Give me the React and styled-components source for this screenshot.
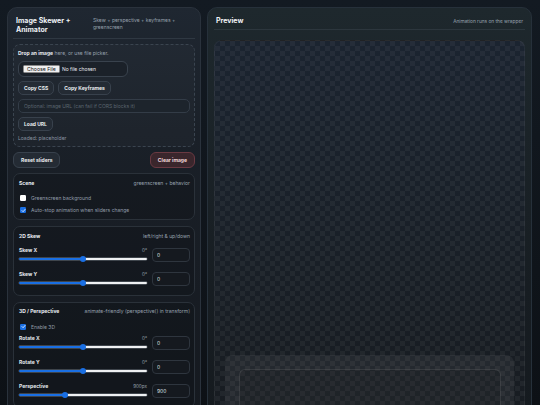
import React from 'react';
import styled, { createGlobalStyle } from 'styled-components';

const GlobalStyle = createGlobalStyle`
  html, body { margin: 0; padding: 0; }
  body {
    background: linear-gradient(180deg, #131a22 0%, #0d1116 100%);
    font-family: Inter, "Noto Sans", sans-serif;
    color: #e9edf2;
    overflow: hidden;
  }
  * { box-sizing: border-box; }
`;

const Page = styled.div`
  display: grid;
  grid-template-columns: 194px 325px;
  column-gap: 6px;
  padding: 7px 8px 0 7px;
  height: 405px;
  overflow: hidden;
  align-items: start;
`;

const LeftPanel = styled.section`
  border: 1px solid #2a323c;
  border-radius: 10px;
  background: linear-gradient(180deg, #1f2731 0%, #1a2028 30%, #15191f 100%);
  padding: 8px 5px 10px;
  display: flex;
  flex-direction: column;
  gap: 5px;
`;

const RightPanel = styled.section`
  border: 1px solid #26303a;
  border-radius: 10px;
  background: linear-gradient(180deg, #1e282d 0%, #171d22 40%, #111418 100%);
  padding: 7px 6px 0;
  height: 700px;
  display: flex;
  flex-direction: column;
`;

const Header = styled.header`
  display: flex;
  justify-content: space-between;
  gap: 8px;
  padding: 0 3px 4px;
  border-bottom: 1px solid #2f3842;
`;

const Title = styled.h1`
  margin: 0;
  flex: 1;
  font-size: 7px;
  line-height: 9px;
  font-weight: 700;
  color: #eef1f5;
`;

const Subtitle = styled.p`
  margin: 1px 0 0;
  flex: 0 0 99px;
  font-size: 5px;
  line-height: 7px;
  color: #97a1ad;
`;

const PreviewHeader = styled.header`
  display: flex;
  justify-content: space-between;
  align-items: center;
  padding: 1px 2px 4px;
  border-bottom: 1px solid #2c363d;
  margin-bottom: 10px;
`;

const DropZone = styled.div`
  border: 1px dashed #3a444f;
  border-radius: 7px;
  background: rgba(255, 255, 255, 0.02);
  padding: 5px 4px;
  display: flex;
  flex-direction: column;
  align-items: flex-start;
  gap: 4px;
`;

const Hint = styled.p`
  margin: 0 0 1px;
  font-size: 5px;
  line-height: 6px;
  color: #98a2ae;
  strong { color: #e6eaef; font-weight: 700; }
`;

const FileBox = styled.label`
  display: flex;
  align-items: center;
  gap: 2px;
  width: 110px;
  height: 16px;
  padding: 0 4px;
  border: 1px solid #39424d;
  border-radius: 6px;
  background: #1b2129;
  font-size: 5px;
  color: #e8ebef;
  input { display: none; }
`;

const FileButton = styled.span`
  display: inline-flex;
  align-items: center;
  height: 8px;
  padding: 0 3px;
  background: #efefef;
  color: #111;
  border: 0.5px solid #8a8a8a;
  border-radius: 1.5px;
  font-size: 5.2px;
`;

const Row = styled.div`
  display: flex;
  gap: 4px;
  justify-content: ${(p) => (p.$spread ? 'space-between' : 'flex-start')};
  width: 100%;
`;

const Button = styled.button`
  height: ${(p) => (p.$big ? 16 : 14)}px;
  padding: 0 ${(p) => (p.$big ? 7 : 5)}px;
  border-radius: ${(p) => (p.$big ? 6 : 5)}px;
  border: 1px solid ${(p) => (p.$danger ? '#6a3942' : '#38414c')};
  background: ${(p) => (p.$danger ? '#3a262c' : '#242b34')};
  color: ${(p) => (p.$danger ? '#f1d9dc' : '#e8ebef')};
  font-family: inherit;
  font-size: 5px;
  font-weight: 700;
  cursor: pointer;
`;

const TextInput = styled.input`
  width: 100%;
  height: 14px;
  padding: 0 5px;
  border: 1px solid #333c47;
  border-radius: 5px;
  background: #1d242c;
  color: #e8ebef;
  font-family: inherit;
  font-size: 5px;
  outline: none;
  &::placeholder { color: #5c6570; }
`;

const Muted = styled.p`
  margin: 0;
  font-size: 5px;
  line-height: 6px;
  color: #8c96a2;
`;

const Card = styled.div`
  border: 1px solid #2a3139;
  border-radius: 7px;
  background: rgba(10, 13, 17, 0.28);
  padding: 5px 4px ${(p) => (p.$tight ? 5 : 7.5)}px 5px;
  margin-bottom: 1px;
  display: flex;
  flex-direction: column;
  gap: 8px;
`;

const CardHead = styled.div`
  display: flex;
  justify-content: space-between;
  align-items: center;
  height: 7px;
  font-size: 5px;
  strong { font-weight: 700; color: #e9edf2; }
  span { color: #98a2ae; }
`;

const CheckList = styled.div`
  display: flex;
  flex-direction: column;
  gap: 4px;
`;

const CheckRow = styled.label`
  display: flex;
  align-items: center;
  gap: 5px;
  height: 8px;
  padding-left: 1px;
  margin-bottom: ${(p) => (p.$pull ? '-3.5px' : '0')};
  font-size: 5px;
  color: #929ca8;
  cursor: pointer;
`;

const Box = styled.span`
  width: 6px;
  height: 6px;
  border-radius: 1.2px;
  background: ${(p) => (p.$on ? '#1a6fe3' : '#ffffff')};
  display: inline-flex;
  align-items: center;
  justify-content: center;
  flex: none;
`;

const SliderRow = styled.div`
  display: grid;
  grid-template-columns: 1fr 38px;
  column-gap: 5px;
  align-items: center;
  height: 16px;
`;

const SliderCol = styled.div`
  display: flex;
  flex-direction: column;
  gap: 1px;
`;

const SliderLabel = styled.div`
  display: flex;
  justify-content: space-between;
  height: 7px;
  font-size: 5px;
  line-height: 7px;
  strong { font-weight: 700; color: #e6eaef; }
  span { color: #98a2ae; font-size: 4.6px; }
`;

const Range = styled.input`
  -webkit-appearance: none;
  appearance: none;
  width: 100%;
  height: 8px;
  margin: 0;
  background: transparent;
  display: block;
  &::-webkit-slider-runnable-track {
    height: 2.6px;
    border-radius: 2px;
    background: linear-gradient(
      to right,
      #1a6fe3 0%,
      #1a6fe3 ${(p) => p.$pct}%,
      #eef0f2 ${(p) => p.$pct}%,
      #eef0f2 100%
    );
    box-shadow: 0 0 0 0.4px #6b727a;
  }
  &::-webkit-slider-thumb {
    -webkit-appearance: none;
    width: 6px;
    height: 6px;
    margin-top: -1.7px;
    border-radius: 50%;
    background: #1a6fe3;
    border: none;
  }
`;

const NumberBox = styled.input`
  width: 38px;
  height: 14px;
  padding: 0 4px;
  border: 1px solid #2e353e;
  border-radius: 4px;
  background: #15191f;
  color: #dfe3e8;
  font-family: inherit;
  font-size: 5px;
  outline: none;
  -moz-appearance: textfield;
  &::-webkit-inner-spin-button { -webkit-appearance: none; }
`;

const PreviewTitle = styled.h2`
  margin: 0;
  font-size: 7px;
  line-height: 9px;
  font-weight: 700;
  color: #eef1f5;
`;

const PreviewNote = styled.span`
  font-size: 4.8px;
  color: #97a1ad;
`;

const Checker = styled.div`
  border: 1px solid rgba(255, 255, 255, 0.05);
  border-radius: 8px;
  min-height: 640px;
  padding: 314px 10px 0;
  display: flex;
  flex-direction: column;
  align-items: stretch;
  background-color: #171b20;
  background-image:
    linear-gradient(45deg, rgba(255,255,255,0.045) 25%, transparent 25%, transparent 75%, rgba(255,255,255,0.045) 75%),
    linear-gradient(45deg, rgba(255,255,255,0.045) 25%, transparent 25%, transparent 75%, rgba(255,255,255,0.045) 75%),
    linear-gradient(180deg, #1b2430 0%, #181d23 50%, #151719 100%);
  background-size: 10px 10px, 10px 10px, 100% 100%;
  background-position: 0 0, 5px 5px, 0 0;
`;

const Stage = styled.div`
  border-radius: 8px;
  background: rgba(255, 255, 255, 0.055);
  padding: 14px 13px 0 14px;
  height: 200px;
`;

const Frame = styled.div`
  height: 100%;
  border: 1px solid rgba(255, 255, 255, 0.1);
  border-radius: 6px;
  background: rgba(0, 0, 0, 0.12);
`;

function Check({ on, label, pull }) {
  return (
    <CheckRow $pull={pull}>
      <Box $on={on}>
        {on && (
          <svg width="5" height="5" viewBox="0 0 10 10">
            <path d="M2 5.2 L4.2 7.4 L8.2 2.8" fill="none" stroke="#fff" strokeWidth="1.6" strokeLinecap="round" strokeLinejoin="round" />
          </svg>
        )}
      </Box>
      {label}
    </CheckRow>
  );
}

function Slider({ label, unit, min, max, value }) {
  const pct = ((value - min) / (max - min)) * 100;
  return (
    <SliderRow>
      <SliderCol>
        <SliderLabel>
          <strong>{label}</strong>
          <span>{value}{unit}</span>
        </SliderLabel>
        <Range type="range" min={min} max={max} defaultValue={value} $pct={pct} />
      </SliderCol>
      <NumberBox type="number" defaultValue={value} />
    </SliderRow>
  );
}

export default function App() {
  return (
    <>
      <GlobalStyle />
      <Page>
        <LeftPanel>
          <Header>
            <Title>Image Skewer + Animator</Title>
            <Subtitle>Skew + perspective + keyframes + greenscreen</Subtitle>
          </Header>
          <DropZone>
            <Hint><strong>Drop an image</strong> here, or use file picker.</Hint>
            <FileBox>
              <input type="file" accept="image/*" />
              <FileButton>Choose File</FileButton>
              <span>No file chosen</span>
            </FileBox>
            <Row>
              <Button>Copy CSS</Button>
              <Button>Copy Keyframes</Button>
            </Row>
            <TextInput placeholder="Optional: image URL (can fail if CORS blocks it)" />
            <Button>Load URL</Button>
            <Muted>Loaded: placeholder</Muted>
          </DropZone>
          <Row $spread>
            <Button $big>Reset sliders</Button>
            <Button $big $danger>Clear image</Button>
          </Row>
          <Card $tight>
            <CardHead><strong>Scene</strong><span>greenscreen + behavior</span></CardHead>
            <CheckList>
              <Check label="Greenscreen background" />
              <Check on label="Auto-stop animation when sliders change" />
            </CheckList>
          </Card>
          <Card>
            <CardHead><strong>2D Skew</strong><span>left/right &amp; up/down</span></CardHead>
            <Slider label="Skew X" unit="°" min={-60} max={60} value={0} />
            <Slider label="Skew Y" unit="°" min={-60} max={60} value={0} />
          </Card>
          <Card>
            <CardHead><strong>3D / Perspective</strong><span>animate-friendly (perspective() in transform)</span></CardHead>
            <Check on pull label="Enable 3D" />
            <Slider label="Rotate X" unit="°" min={-180} max={180} value={0} />
            <Slider label="Rotate Y" unit="°" min={-180} max={180} value={0} />
            <Slider label="Perspective" unit="px" min={200} max={2200} value={900} />
          </Card>
        </LeftPanel>
        <RightPanel>
          <PreviewHeader>
            <PreviewTitle>Preview</PreviewTitle>
            <PreviewNote>Animation runs on the wrapper</PreviewNote>
          </PreviewHeader>
          <Checker>
            <Stage>
              <Frame />
            </Stage>
          </Checker>
        </RightPanel>
      </Page>
    </>
  );
}
